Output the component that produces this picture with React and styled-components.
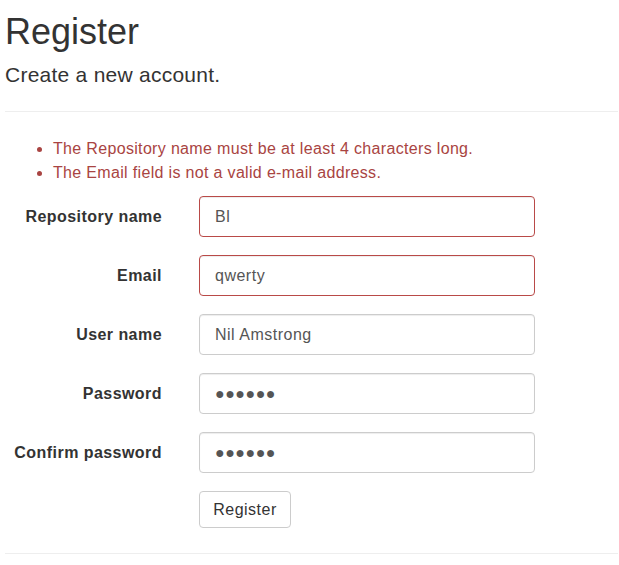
import React from 'react';
import styled, { createGlobalStyle } from 'styled-components';

const GlobalStyle = createGlobalStyle`
  html, body {
    margin: 0;
    padding: 0;
    background: #fff;
  }
  body {
    font-family: "Liberation Sans", Arial, Helvetica, sans-serif;
    font-size: 16px;
    color: #333;
  }
`;

const Page = styled.div`
  padding: 12px 1px 0 5px;
`;

const Title = styled.h1`
  margin: 0;
  font-size: 36px;
  font-weight: 500;
  line-height: 40px;
`;

const Subtitle = styled.h4`
  margin: 11px 0 0;
  font-size: 21px;
  font-weight: 500;
  line-height: 23px;
  letter-spacing: 0.25px;
`;

const Rule = styled.hr`
  margin: ${(p) => p.$top}px 0 0;
  border: 0;
  border-top: 1px solid #eee;
  height: 0;
`;

const Errors = styled.ul`
  margin: 25px 0 0;
  padding-left: 48px;
  color: #a94442;
  line-height: 24px;
  letter-spacing: 0.33px;

  li::marker {
    font-size: 15px;
  }
`;

const Form = styled.form`
  margin-top: 11px;
  display: flex;
  flex-direction: column;
  gap: 18px;
`;

const Row = styled.div`
  display: grid;
  grid-template-columns: 157px 336px;
  column-gap: 37px;
  align-items: center;
`;

const Label = styled.label`
  text-align: right;
  font-weight: bold;
  color: #333;
  letter-spacing: 0.45px;
`;

const Input = styled.input`
  box-sizing: border-box;
  width: 100%;
  height: 41px;
  padding: 0 15px;
  font-family: inherit;
  font-size: 16px;
  color: #555;
  background: #fff;
  border: 1px solid ${(p) => (p.$invalid ? '#b94a48' : '#ccc')};
  border-radius: 4px;
  box-shadow: inset 0 1px 1px rgba(0, 0, 0, 0.075);
  outline: none;
  letter-spacing: 0.5px;
`;

const Button = styled.button`
  box-sizing: border-box;
  width: 92px;
  height: 37px;
  font-family: inherit;
  font-size: 16px;
  color: #333;
  background: #fff;
  border: 1px solid #ccc;
  border-radius: 4px;
  letter-spacing: 0.5px;
  cursor: pointer;
`;

const fields = [
  { label: 'Repository name', value: 'Bl', invalid: true },
  { label: 'Email', value: 'qwerty', invalid: true },
  { label: 'User name', value: 'Nil Amstrong' },
  { label: 'Password', value: '●●●●●●' },
  { label: 'Confirm password', value: '●●●●●●' },
];

export default function App() {
  return (
    <Page>
      <GlobalStyle />
      <Title>Register</Title>
      <Subtitle>Create a new account.</Subtitle>
      <Rule $top={25} />
      <Errors>
        <li>The Repository name must be at least 4 characters long.</li>
        <li>The Email field is not a valid e-mail address.</li>
      </Errors>
      <Form onSubmit={(e) => e.preventDefault()}>
        {fields.map((f) => (
          <Row key={f.label}>
            <Label>{f.label}</Label>
            <Input type="text" readOnly value={f.value} $invalid={f.invalid} />
          </Row>
        ))}
        <Row>
          <span />
          <div>
            <Button type="submit">Register</Button>
          </div>
        </Row>
      </Form>
      <Rule $top={25} />
    </Page>
  );
}
